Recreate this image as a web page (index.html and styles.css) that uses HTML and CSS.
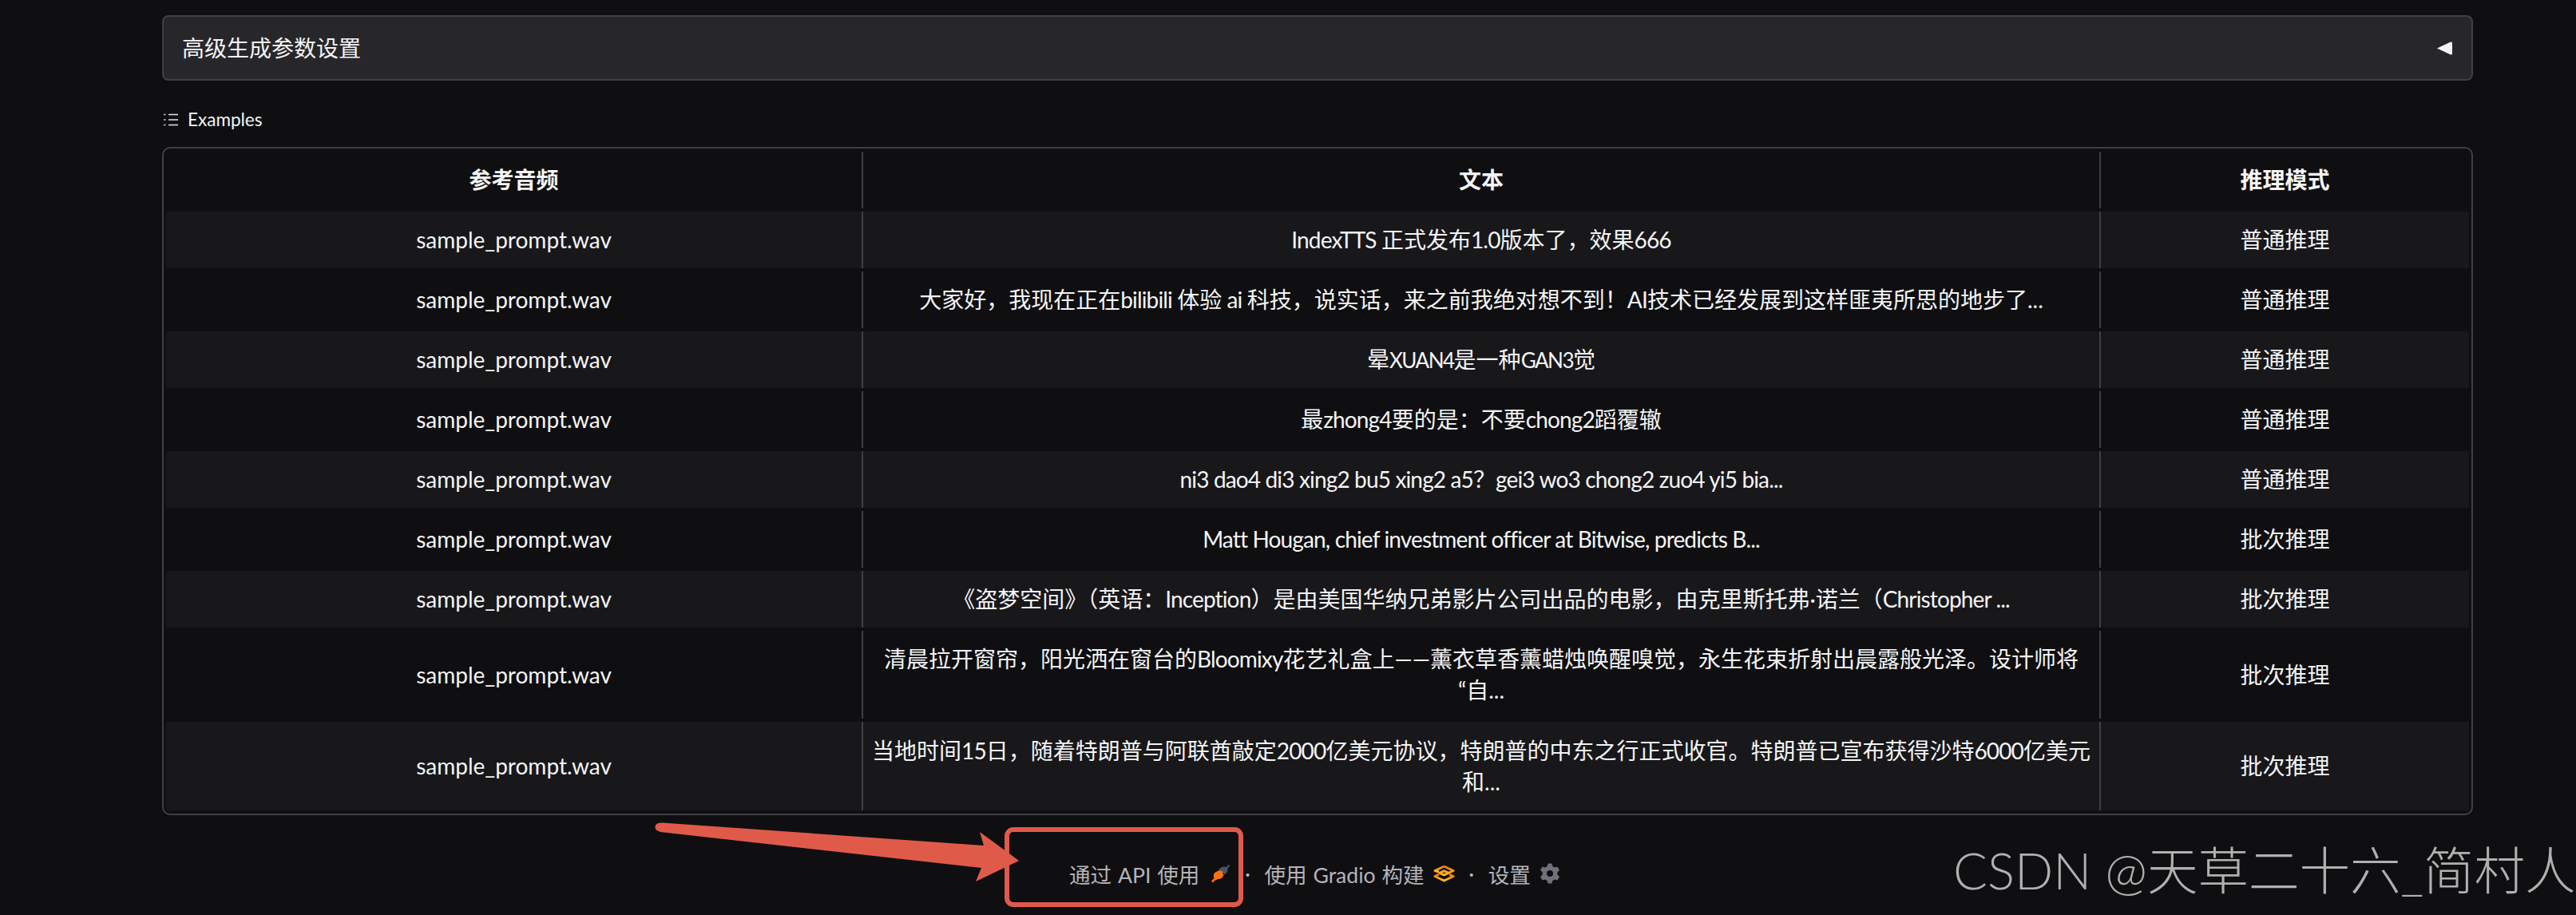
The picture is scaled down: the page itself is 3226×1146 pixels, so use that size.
FILE: index.html
```html
<!DOCTYPE html>
<html lang="zh">
<head>
<meta charset="utf-8">
<title>Examples</title>
<link rel="stylesheet" href="styles.css">
</head>
<body>
<main class="page">
  <div class="accordion">
    <span>高级生成参数设置</span>
    <svg class="caret" viewBox="0 0 19 17" width="19" height="17"><path d="M0 8.500 L17 0.500 Q19 0 19 2 L19 15 Q19 17 17 16.500 Z" fill="#f4f4f5"/></svg>
  </div>
  <div class="examples-label">
    <svg viewBox="0 0 18 16" width="18" height="16"><g fill="none" stroke="#e4e4e7" stroke-width="1.600"><path d="M6 1.500H18M6 8H18M6 14.500H18"/><path d="M0 1.500H3M0 8H3M0 14.500H3" stroke-dasharray="1.600 0.800"/></g></svg>
    <span>Examples</span>
  </div>
  <div class="table">
    <div class="row head"><div class="cell">参考音频</div><div class="cell">文本</div><div class="cell">推理模式</div></div>
    <div class="row shade"><div class="cell">sample_prompt.wav</div><div class="cell"><span><span class="lat">IndexTTS </span>正式发布<span class="lat">1.0</span>版本了，效果<span class="lat">666</span></span></div><div class="cell">普通推理</div></div>
    <div class="row"><div class="cell">sample_prompt.wav</div><div class="cell"><span>大家好，我现在正在<span class="lat">bilibili </span>体验<span class="lat"> ai </span>科技，说实话，来之前我绝对想不到！<span class="lat">AI</span>技术已经发展到这样匪夷所思的地步了...</span></div><div class="cell">普通推理</div></div>
    <div class="row shade"><div class="cell">sample_prompt.wav</div><div class="cell"><span>晕<span class="caps">XUAN4</span>是一种<span class="caps">GAN3</span>觉</span></div><div class="cell">普通推理</div></div>
    <div class="row"><div class="cell">sample_prompt.wav</div><div class="cell"><span>最<span class="lat">zhong4</span>要的是：不要<span class="lat">chong2</span>蹈覆辙</span></div><div class="cell">普通推理</div></div>
    <div class="row shade"><div class="cell">sample_prompt.wav</div><div class="cell"><span><span class="lat">ni3 dao4 di3 xing2 bu5 xing2 a5</span>？<span class="lat">gei3 wo3 chong2 zuo4 yi5 bia...</span></span></div><div class="cell">普通推理</div></div>
    <div class="row"><div class="cell">sample_prompt.wav</div><div class="cell"><span class="lat">Matt Hougan, chief investment officer at Bitwise, predicts B...</span></div><div class="cell">批次推理</div></div>
    <div class="row shade"><div class="cell">sample_prompt.wav</div><div class="cell"><span>《盗梦空间》（英语：<span class="lat">Inception</span>）是由美国华纳兄弟影片公司出品的电影，由克里斯托弗·诺兰（<span class="lat">Christopher ...</span></span></div><div class="cell">批次推理</div></div>
    <div class="row tall"><div class="cell">sample_prompt.wav</div><div class="cell"><span>清晨拉开窗帘，阳光洒在窗台的<span class="lat">Bloomixy</span>花艺礼盒上——薰衣草香薰蜡烛唤醒嗅觉，永生花束折射出晨露般光泽。设计师将<br>“自...</span></div><div class="cell">批次推理</div></div>
    <div class="row shade tall"><div class="cell">sample_prompt.wav</div><div class="cell"><span>当地时间<span class="lat">15</span>日，随着特朗普与阿联酋敲定<span class="lat">2000</span>亿美元协议，特朗普的中东之行正式收官。特朗普已宣布获得沙特<span class="lat">6000</span>亿美元<br>和...</span></div><div class="cell">批次推理</div></div>
  </div>
  <footer class="footer">
    <span class="flink api">通过 API 使用
      <svg class="api-icon" viewBox="0 0 24 24" width="24" height="24"><path d="M9.500 6.500 Q14 2 19 4 L21.500 0.800 L23.200 2.300 L20.300 5.800 Q21 10 17 13.500 Z" fill="#4b5563"/><path d="M9 8.500 L10.500 7.500 L12 9 L13 8.500 L15 10.500 L14 11.500 L15.500 13.500 Q14 19 8.500 19 L5 20.500 L1.500 23.500 L0 21.500 L3.500 18 Q1.500 13 5 10.500 Z" fill="#f97316"/></svg>
    </span>
    <span class="dot">·</span>
    <span class="flink">使用 Gradio 构建
      <svg class="logo" viewBox="0 0 27 22" width="27" height="22"><defs><linearGradient id="lg" x1="0" y1="0" x2="0" y2="1"><stop offset="0" stop-color="#f97316"/><stop offset="1" stop-color="#fbbf24"/></linearGradient></defs><g fill="none" stroke="url(#lg)" stroke-width="3" stroke-linejoin="round"><path d="M13.500 2 L25 7.500 L13.500 13 L8 10.300 L13.500 7.700 L19 10.300"/><path d="M7 9 L2 7.500 L13.500 2"/><path d="M7 12 L2 14.500 L13.500 20 L25 14.500 L20 12"/></g></svg>
    </span>
    <span class="dot">·</span>
    <span class="flink">设置
      <svg class="gear" viewBox="0 0 26 26" width="26" height="26"><path fill-rule="evenodd" fill="#71717a" d="M10.500 0.500 H15.500 L16.300 4 L19 5.500 L22.500 4.500 L25 9 L22.300 11.500 V14.500 L25 17 L22.500 21.500 L19 20.500 L16.300 22 L15.500 25.500 H10.500 L9.700 22 L7 20.500 L3.500 21.500 L1 17 L3.700 14.500 V11.500 L1 9 L3.500 4.500 L7 5.500 L9.700 4 Z M13 9 A4 4 0 1 0 13 17 A4 4 0 1 0 13 9 Z"/></svg>
    </span>
  </footer>
</main>
<div class="callout"></div>
<svg class="arrow" viewBox="0 0 3226 1146" width="3226" height="1146"><path d="M830 1030.500 L1232 1059 L1227 1042 L1276 1078 L1222 1104 L1229 1087 L827 1042 Q820 1040 820.500 1035.500 Q821 1030 830 1030.500 Z" fill="#e05a4a"/></svg>
<div class="watermark">CSDN @天草二十六_简村人</div>
</body>
</html>
```
FILE: styles.css
```css
* { box-sizing: border-box; }
html, body { margin: 0; height: 100%; }
body {
  background: #0f0f11;
  color: #f4f4f5;
  font-family: Lato, "Noto Sans CJK SC", sans-serif;
  font-size: 28px;
  overflow: hidden;
}
.page { width: 2894px; margin-left: 203px; padding-top: 19px; }
.accordion {
  height: 82px;
  display: flex;
  align-items: center;
  justify-content: space-between;
  padding: 0 24px 2px 23px;
  background: #27272a;
  border: 2px solid #3f3f46;
  border-radius: 8px;
}
.caret { display: block; margin-top: 2px; }
.examples-label {
  height: 83px;
  display: flex;
  align-items: center;
  gap: 12px;
  padding: 14px 0 0 2px;
  font-size: 22.500px;
}
.table {
  border: 2px solid #3f3f46;
  border-radius: 10px;
  padding: 0 3px 3px;
  height: 837px;
}
.row {
  display: grid;
  grid-template-columns: 873px 1550px 1fr;
  height: 79px;
  padding: 4px 0;
}
.row.head { height: 79px; font-weight: 700; }
.row.shade { height: 71px; padding: 0; background: #18181b; }
.row.tall { height: 118px; }
.row.shade.tall { height: 111px; }
.cell {
  display: flex;
  align-items: center;
  justify-content: center;
  padding: 0 8px;
  text-align: center;
  line-height: 39px;
  border-right: 2px solid #3f3f46;
}
.cell:last-child { border-right: 0; }
.lat { letter-spacing: -0.850px; }
.caps { font-size: 26px; letter-spacing: -1.500px; }
.footer {
  display: flex;
  align-items: center;
  justify-content: flex-start;
  gap: 19px;
  height: 100px;
  padding: 46px 0 0 1136px;
  color: #b4b4ba;
  font-size: 26.600px;
  word-spacing: 1px;
}
.flink { display: flex; align-items: center; gap: 11px; white-space: nowrap; }
.flink.api { gap: 15px; }
.dot { width: 4px; display: flex; justify-content: center; }
.callout {
  position: absolute;
  left: 1258px;
  top: 1036px;
  width: 299px;
  height: 100px;
  border: 6px solid #e05a4a;
  border-radius: 11px;
}
.arrow { position: absolute; left: 0; top: 0; pointer-events: none; }
.watermark {
  position: absolute;
  left: 2446px;
  top: 1045px;
  white-space: nowrap;
  font-family: Lato, "Noto Sans CJK SC", sans-serif;
  font-weight: 300;
  font-size: 63.500px;
  line-height: 90px;
  color: #b0b0b0;
}
```
